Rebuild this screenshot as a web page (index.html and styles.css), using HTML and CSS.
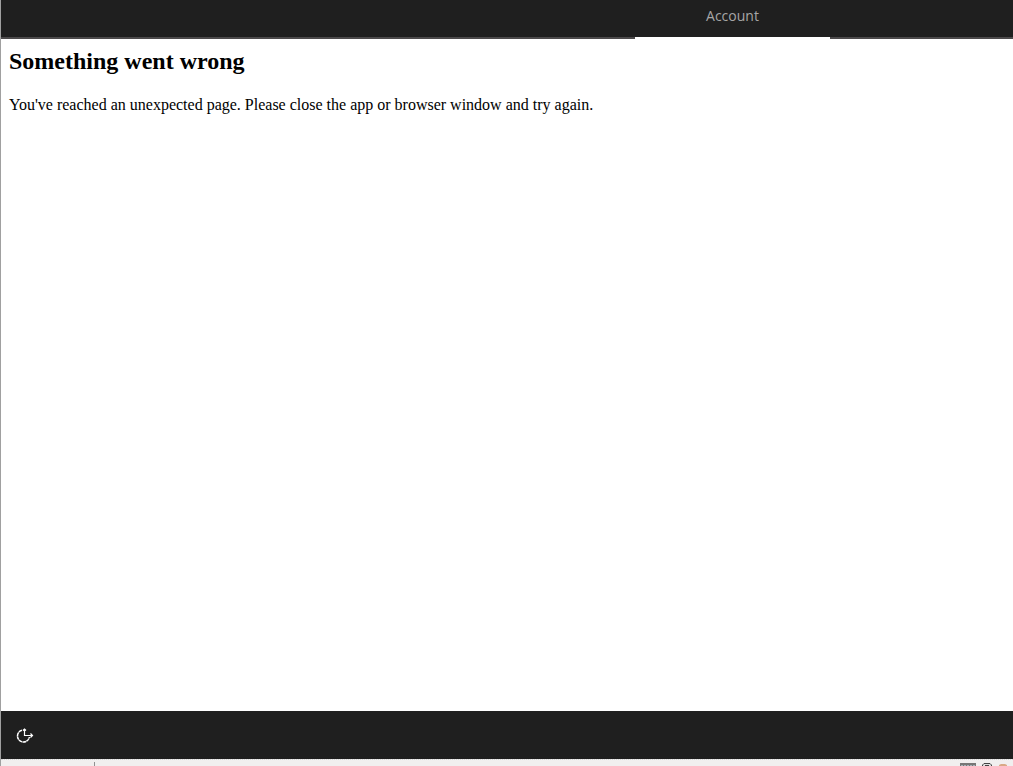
FILE: index.html
```
<!DOCTYPE html>
<html lang="en">
<head>
    <meta charset="UTF-8">
    <meta name="viewport" content="width=device-width, initial-scale=1.0">
    <title>Something went wrong</title>
    <link rel="stylesheet" href="styles.css">
</head>
<body>

    <nav class="tabs">
        <a class="tab active" href="#account">Account</a>
    </nav>

    <main class="content" id="account">
        <h1>Something went wrong</h1>
        <p>You've reached an unexpected page. Please close the app or browser window and try again.</p>
    </main>

    <footer class="toolbar">
        <button class="ease-button" type="button" aria-label="Ease of Access">
            <svg width="18" height="18" viewBox="0 0 18 18" fill="none" stroke="#fff" aria-hidden="true">
                <path d="M8.5 3V9.5H16.5M14.5 7.5L16.5 9.5L14.5 11.5M7 4.5L8.5 3L10 4.5" stroke-width="1.2"/>
                <path d="M6 4.2A6 6 0 1 0 13.4 11" stroke-width="1.5" stroke-dasharray="3.6 .4"/>
            </svg>
        </button>
    </footer>

    <!-- Top edge of the host window's status bar -->
    <div class="status-bar">
        <span class="divider"></span>
        <svg class="devices" width="50" height="3" viewBox="0 0 50 3" aria-hidden="true">
            <path d="M0 0H16V3H0Z" fill="#777"/>
            <path d="M1 2.5H15" stroke="#a9b5bb" stroke-width="1" stroke-dasharray="2 1"/>
            <path d="M22.5 3V2L24 .5H30L31.5 2V3" fill="#ddd" stroke="#444" stroke-width="1"/>
            <path d="M25 2H29V3H25Z" fill="#444"/>
            <path d="M39 3V2L41 1H45L47 2V3Z" fill="#d9a986"/>
        </svg>
    </div>

</body>
</html>
```

FILE: styles.css
```
* {
    box-sizing: border-box;
}

body {
    display: flex;
    flex-direction: column;
    min-height: 100vh;
    margin: 0;
    border-left: 1px solid #a0a0a0;
    background-color: #fff;
    color: #000;
    font-family: "Liberation Serif", "Times New Roman", serif;
    font-size: 16px;
}

/* Top tabs */
.tabs {
    display: grid;
    grid-template-columns: 634fr 195fr 183fr;
    height: 39px;
    background: linear-gradient(#4c4a4b, #4c4a4b) bottom / 100% 2px no-repeat #1f1f1f;
}

.tab {
    grid-column: 2;
    padding-top: 6px;
    border-bottom: 2px solid transparent;
    color: #a6a6a6;
    font-family: "Open Sans", "Noto Sans", sans-serif;
    font-size: 14px;
    line-height: 20px;
    text-align: center;
    text-decoration: none;
}

.tab.active {
    border-bottom-color: #fff;
}

/* Error message */
.content {
    flex: 1;
    padding: 8px;
}

.content h1 {
    margin: 0 0 20px;
    font-size: 24px;
    line-height: 28px;
}

.content p {
    margin: 0;
    line-height: 20px;
}

/* Bottom toolbar */
.toolbar {
    display: flex;
    align-items: center;
    height: 48px;
    background-color: #1f1f1f;
}

.ease-button {
    display: flex;
    align-items: center;
    justify-content: center;
    width: 48px;
    height: 48px;
    padding: 0;
    border: 0;
    background: none;
}

/* Status bar */
.status-bar {
    display: flex;
    align-items: flex-end;
    justify-content: space-between;
    height: 7px;
    padding: 0 3px 0 93px;
    border-top: 1px dotted #d8d8d8;
    background-color: #f1efef;
}

.divider {
    width: 1px;
    height: 4px;
    background-color: #919191;
}

.devices {
    display: block;
}
```
